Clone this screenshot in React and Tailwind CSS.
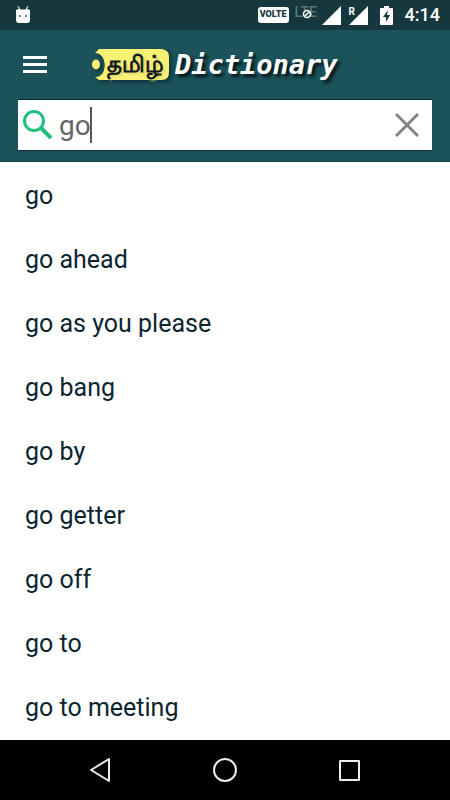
import { useState } from 'react';

const WORDS = [
  'go', 'go ahead', 'go as you please', 'go bang', 'go by',
  'go getter', 'go off', 'go to', 'go to meeting',
];

export default function App() {
  const [query, setQuery] = useState('go');
  const results = WORDS.filter(w => w.startsWith(query.toLowerCase()));

  return (
    <div className="flex min-h-screen flex-col bg-white font-['Roboto',sans-serif]">
      <StatusBar />

      <header className="border-b border-[#174349] bg-[#1c525a] px-[18px] pb-[10px]">
        <div className="flex h-[69px] items-center">
          <button aria-label="Menu" className="ml-[5px] flex w-6 flex-col gap-1">
            <span className="h-[3px] w-full bg-white" />
            <span className="h-[3px] w-full bg-white" />
            <span className="h-[3px] w-full bg-white" />
          </button>
          <Logo />
        </div>

        <div className="flex h-[52px] items-center border-y border-[#0c2b36] bg-white px-[5px]">
          <svg aria-hidden="true" viewBox="0 0 30 30" className="h-[30px] w-[30px] shrink-0" fill="none" stroke="#1fbf7f" strokeWidth="3">
            <circle cx="11" cy="11" r="9.500" />
            <path d="M18 18 L28 28" strokeWidth="4" />
          </svg>
          <label className="ml-[6px] flex h-full min-w-0 flex-1 cursor-text items-center">
            <input type="text" aria-label="Search word" value={query} onChange={(e) => setQuery(e.target.value)}
              className="h-full max-w-full text-[28px] text-[#666] caret-transparent outline-none [field-sizing:content]" />
            <span className="-ml-px h-9 w-[2px] shrink-0 bg-[#555]" />
          </label>
          <button aria-label="Clear" onClick={() => setQuery('')} className="mr-2 shrink-0">
            <svg viewBox="0 0 24 24" className="h-6 w-6" fill="none" stroke="#858585" strokeWidth="3">
              <path d="M1 1 L23 23 M23 1 L1 23" />
            </svg>
          </button>
        </div>
      </header>

      <main className="flex-1 pt-[2px]">
        <ul>
          {results.map(w => (
            <li key={w}>
              <button className="flex h-16 w-full items-center px-[25px] text-left text-[25px] text-[#0b2530]">{w}</button>
            </li>
          ))}
        </ul>
      </main>

      <NavBar />
    </div>
  );
}

function StatusBar() {
  return (
    <div className="flex h-[30px] items-center bg-[#15373d] px-[10px] text-white">
      <svg viewBox="0 0 16 18" className="ml-[5px] h-[18px] w-4">
        <path d="M3 0 L5 4 M13 0 L11 4" stroke="#b8c6c8" strokeWidth="1.500" />
        <path d="M1 4 L4 3 Q8 4 12 3 L15 4 V14 Q15 17 12 17 H4 Q1 17 1 14 Z" fill="#fff" />
        <path d="M4 9 h2 v2 h-2 z M10 9 h2 v2 h-2 z" fill="#78898c" />
      </svg>
      <div className="ml-auto flex items-center">
        <span className="flex h-4 w-[31px] items-center justify-center rounded-[3px] bg-white text-[9px] font-black text-[#15373d]">VOLTE</span>
        <span className="relative ml-[6px] w-[23px] pb-[6px] text-[14px] leading-[14px] font-medium text-[#5d767a]">
          LTE
          <svg viewBox="0 0 10 10" className="absolute top-1 left-[7px] h-[10px] w-[10px]" fill="#15373d" stroke="#fff" strokeWidth="1.600">
            <circle cx="5" cy="5" r="3.500" />
            <path d="M3 7 L7 3" />
          </svg>
        </span>
        <Signal className="ml-1" />
        <span className="relative ml-2">
          <span className="absolute top-0 left-0 text-[10px] leading-[11px] font-bold">R</span>
          <Signal />
        </span>
        <svg viewBox="0 0 13 19" className="ml-3 h-[19px] w-[13px]">
          <path d="M4 0 H9 V2 H12 Q13 2 13 3 V18 Q13 19 12 19 H1 Q0 19 0 18 V3 Q0 2 1 2 H4 Z" fill="#fff" />
          <path d="M8 4 L3 11 H6 V16 L10 9 H7 Z" fill="#15373d" />
        </svg>
        <time className="ml-3 text-[18px] leading-[30px] font-medium">4:14</time>
      </div>
    </div>
  );
}

function Signal({ className }) {
  return (
    <svg viewBox="0 0 19 19" className={`h-[19px] w-[19px] ${className || ''}`}>
      <path d="M19 0 V19 H0 Z" fill="#fff" />
    </svg>
  );
}

function Logo() {
  return (
    <h1 className="ml-[45px] flex items-center">
      <span className="relative flex h-8 w-[77px] items-center justify-end pr-[5px] text-[23px] leading-8 text-[#111820]">
        <svg aria-hidden="true" viewBox="0 0 77 32" className="absolute inset-0 h-8 w-[77px] drop-shadow-[2px_2px_2px_#0c2f36]">
          <path d="M7 0 H70 Q77 1 77 8 V23 Q77 31 70 31 H7 L3 28 C16 29 16 4 3 4 Z" fill="#f9f174" />
          <ellipse cx="4" cy="15.500" rx="4" ry="5" fill="#f9f174" />
        </svg>
        <span lang="ta" className="relative [-webkit-text-stroke:1px_#111820] text-shadow-[2px_2px_2px_#cfc868]">தமிழ்</span>
      </span>
      <span className="ml-[6px] font-['DejaVu_Sans_Mono',monospace] text-[27px] leading-8 font-bold text-white italic text-shadow-[3px_3px_3px_#06171c]">Dictionary</span>
    </h1>
  );
}

function NavBar() {
  return (
    <nav className="flex h-[60px] items-center justify-between bg-black px-[88px]">
      <button aria-label="Back">
        <svg viewBox="0 0 24 24" className="h-6 w-6" fill="none" stroke="#eee" strokeWidth="2" strokeLinejoin="round">
          <path d="M3 12 L21 1 V23 Z" />
        </svg>
      </button>
      <button aria-label="Home">
        <svg viewBox="0 0 24 24" className="h-6 w-6" fill="none" stroke="#eee" strokeWidth="2">
          <circle cx="12" cy="12" r="11" />
        </svg>
      </button>
      <button aria-label="Recent apps">
        <svg viewBox="0 0 24 24" className="h-6 w-6" fill="none" stroke="#eee" strokeWidth="2" strokeLinejoin="round">
          <rect x="2" y="3" width="19" height="19" />
        </svg>
      </button>
    </nav>
  );
}
